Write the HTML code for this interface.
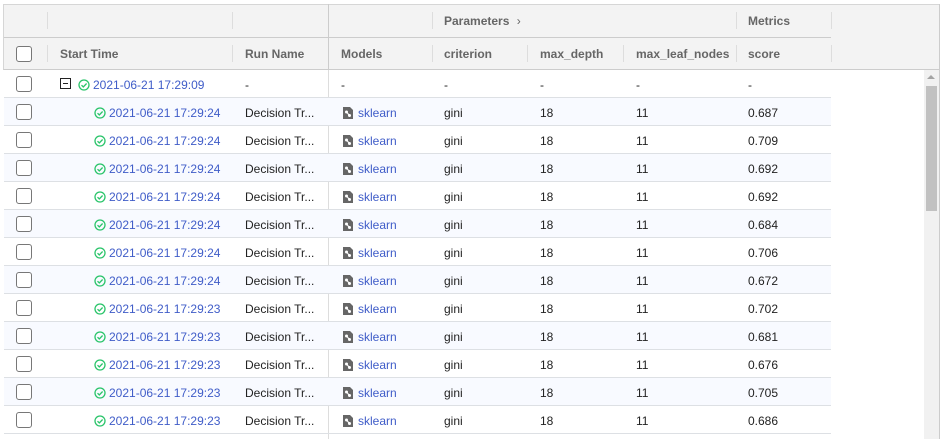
<!DOCTYPE html>
<html style="width:945px;height:439px;overflow:hidden"><head><style>
*{margin:0;padding:0;box-sizing:border-box}
body{width:945px;height:439px;background:#fff;font-family:"Liberation Sans",Arial,sans-serif;font-size:12px;color:#222;position:relative;overflow:hidden}
.a{position:absolute}
.hdr{left:3px;top:4px;width:937px;height:66px;background:#f3f3f3;border:1px solid #d6d6d6;border-bottom:1px solid #ccc}
.hl{position:absolute;height:1px;background:#ccc}
.sep{position:absolute;width:1px;background:#ddd}
.ht{position:absolute;color:#666;font-weight:bold;font-size:12px}
.row{position:absolute;left:4px;width:827px;height:28px;border-bottom:1px solid #dde0e4}
.row.alt{background:#f8faff}
.cb{position:absolute;left:12px;top:6px;width:16px;height:16px;border:1.5px solid #777;border-radius:3px;background:#fff}
.c{position:absolute;top:8px;white-space:nowrap}
.lk{color:#3f5cc8}
.chk{display:inline-block;vertical-align:-2px;margin-right:3px}
</style></head><body>
<div class="a hdr"></div>
<div class="hl" style="left:4px;top:37px;width:827px"></div>
<div class="sep" style="left:47px;top:12px;height:17px"></div>
<div class="sep" style="left:232px;top:12px;height:17px"></div>
<div class="sep" style="left:328px;top:4px;height:66px;background:#ccc"></div>
<div class="sep" style="left:432px;top:12px;height:17px"></div>
<div class="sep" style="left:736px;top:12px;height:17px"></div>
<div class="sep" style="left:831px;top:12px;height:17px"></div>
<div class="sep" style="left:47px;top:45px;height:17px"></div>
<div class="sep" style="left:232px;top:45px;height:17px"></div>
<div class="sep" style="left:432px;top:45px;height:17px"></div>
<div class="sep" style="left:527px;top:45px;height:17px"></div>
<div class="sep" style="left:623px;top:45px;height:17px"></div>
<div class="sep" style="left:736px;top:45px;height:17px"></div>
<div class="sep" style="left:831px;top:45px;height:17px"></div>
<div class="ht" style="left:444px;top:14px">Parameters <span style="font-weight:normal;margin-left:4px">&#x203A;</span></div>
<div class="ht" style="left:748px;top:14px">Metrics</div>
<div class="a" style="left:16px;top:46px;width:16px;height:16px;border:1.5px solid #777;border-radius:3px;background:#fff"></div>
<div class="ht" style="left:60px;top:47px">Start Time</div>
<div class="ht" style="left:245px;top:47px">Run Name</div>
<div class="ht" style="left:341px;top:47px">Models</div>
<div class="ht" style="left:444px;top:47px">criterion</div>
<div class="ht" style="left:540px;top:47px">max_depth</div>
<div class="ht" style="left:636px;top:47px">max_leaf_nodes</div>
<div class="ht" style="left:748px;top:47px">score</div>
<div class="a" style="left:328px;top:70px;width:1px;height:369px;background:#ddd"></div>
<div class="a" style="left:924px;top:70px;width:15px;height:369px;background:#f1f1f1"></div>
<div class="a" style="left:926px;top:86px;width:11px;height:125px;background:#c1c1c1"></div>
<div class="a" style="left:927px;top:75px;width:0;height:0;border-left:4px solid transparent;border-right:4px solid transparent;border-bottom:4px solid #a3a3a3"></div>
<div class="a" style="left:939px;top:4px;width:1px;height:435px;background:#ccc"></div>
<div id="rows"></div>
<script>
var svgChk='<svg class="chk" width="12" height="12" viewBox="0 0 12 12"><circle cx="6" cy="6" r="5" fill="none" stroke="#2ac46a" stroke-width="1.3"/><path d="M3.5 6.2l1.8 1.7 3.3-3.4" fill="none" stroke="#2ac46a" stroke-width="1.3"/></svg>';
var icon='<svg width="12" height="14" viewBox="0 0 12 14" style="vertical-align:-3px;margin-right:4px"><path d="M1 1h7l3 3v9H1z" fill="#666"/><circle cx="4.5" cy="6" r="1.5" fill="#fff"/><circle cx="7.5" cy="9.5" r="1.5" fill="#fff"/><path d="M4.5 6L7.5 9.5" stroke="#fff" stroke-width="1"/></svg>';
var sc=['0.687','0.709','0.692','0.692','0.684','0.706','0.672','0.702','0.681','0.676','0.705','0.686'];
var h='';
h+='<div class="row" style="top:70px"><div class="cb"></div><div class="c" style="left:56px;top:8px;width:11px;height:11px;border:1.3px solid #222"><div style="position:absolute;left:2px;top:4px;width:5px;height:1.3px;background:#222"></div></div><div class="c lk" style="left:74px">'+svgChk+'2021-06-21 17:29:09</div><div class="c" style="left:241px">-</div><div class="c" style="left:337px">-</div><div class="c" style="left:440px">-</div><div class="c" style="left:536px">-</div><div class="c" style="left:632px">-</div><div class="c" style="left:744px">-</div></div>';
for(var i=0;i<12;i++){var t=i<7?'24':'23';
h+='<div class="row'+(i%2==0?' alt':'')+'" style="top:'+(98+i*28)+'px"><div class="cb"></div><div class="c lk" style="left:90px">'+svgChk+'2021-06-21 17:29:'+t+'</div><div class="c" style="left:241px">Decision Tr...</div><div class="c lk" style="left:338px">'+icon+'sklearn</div><div class="c" style="left:440px">gini</div><div class="c" style="left:536px">18</div><div class="c" style="left:632px">11</div><div class="c" style="left:744px">'+sc[i]+'</div></div>';}
document.getElementById('rows').innerHTML=h;
</script>
</body></html>
